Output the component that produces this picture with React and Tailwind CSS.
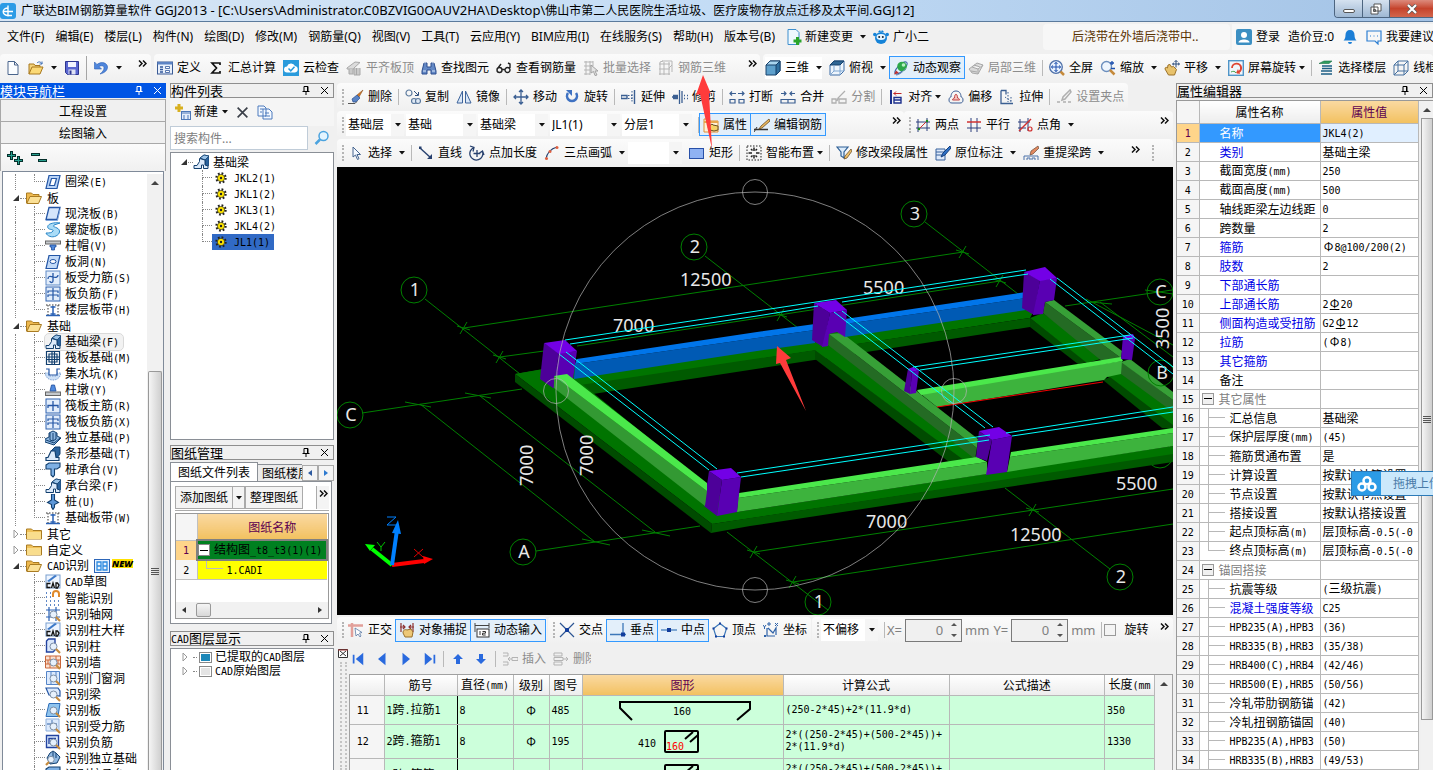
import React from 'react';
import clsx from 'clsx';

const lens = (
  <>
    <circle cx="8.500" cy="8.500" r="3.500" fill="#e7f1fc" stroke="#7c8fa6" />
    <path d="M11 11l4 4" stroke="#c58a3c" strokeWidth="2.200" />
  </>
);

const ICONS = {
  app: (
    <>
      <rect width="16" height="16" rx="3" fill="#2b9be6" />
      <path d="M8 2.500v11M3 8.500h10M8 5a4.500 3.500 0 1 0 0 7.500h4" stroke="#fff" strokeWidth="1.400" fill="none" />
    </>
  ),
  file: <path d="M3 1.500h6.500L13 5v9.500H3zM9.500 1.500V5H13" fill="#fbfdff" stroke="#4a658c" />,
  open: (
    <>
      <path d="M1 14V4h5l1 1.500h5V7" fill="#f3d27a" stroke="#a8781e" />
      <path d="M1 14l3-7h11l-3 7z" fill="#fbd976" stroke="#a8781e" />
      <path d="M9 3c2-2 4-1 5 1M14 1.500V4h-2.500" fill="none" stroke="#3a6cb5" />
    </>
  ),
  save: (
    <>
      <path d="M1.500 1.500h13v13h-11l-2-2z" fill="#5a66d0" stroke="#2d3590" />
      <rect x="4" y="2" width="8" height="5" fill="#f2f4ff" />
      <rect x="4.500" y="9.500" width="7" height="5" fill="#dfe3f5" />
      <rect x="5.500" y="10.500" width="2" height="4" fill="#2d3590" />
    </>
  ),
  undo: <path d="M1.500 2v7h7L6 6.500c3-1.500 5-.5 5 1.500s-1.500 4-4 6c4.500-1 7.500-3.500 7.500-7S9 .5 4 4.500z" fill="#4f86dc" stroke="#2b5fb5" strokeWidth=".6" />,
  define: (
    <>
      <rect x=".5" y="2" width="15" height="12" fill="#e9f0fb" stroke="#3a5b95" />
      <rect x=".5" y="2" width="15" height="2.500" fill="#5c83c4" />
      <path d="M3 7h3M3 9.500h3M3 12h3" stroke="#2f559a" strokeWidth="1.300" />
      <path d="M8.500 6.500h4v2h-4zM8.500 10.500h4v2h-4z" fill="#fff" stroke="#2f559a" strokeWidth=".8" />
    </>
  ),
  sum: <path d="M12 5V3H4l4.500 5L4 13h8v-2" fill="none" stroke="#111" strokeWidth="1.700" />,
  cloud: (
    <>
      <rect width="16" height="16" fill="#2a9bdc" />
      <path d="M4 12.500a3 3 0 0 1 0-6 4.300 4.300 0 0 1 8-.5 3.300 3.300 0 0 1 0 6.500z" fill="#fff" />
      <path d="M5.500 8.500l2.300 2.300 3.700-4" fill="none" stroke="#2a9bdc" strokeWidth="1.500" />
    </>
  ),
  flush: (
    <>
      <path d="M1 8l8-6 5 .5L8 8v1H1z" fill="#dcdcdc" stroke="#a8a8a8" />
      <path d="M3 9v5h4V9M8 8v7h6V8M10.500 8v7" fill="#c9c9c9" stroke="#a8a8a8" />
    </>
  ),
  binoc: (
    <>
      <path d="M3 3h3v4h4V3h3l2 8v3h-5v-4H6v4H1v-3z" fill="#6288c5" stroke="#2c4d8e" />
      <path d="M2 11h3M11 11h3M4 1.500v2M12 1.500v2" stroke="#dbe7fa" />
    </>
  ),
  glasses: <path d="M1 10a2.500 2.500 0 1 0 5 0 2.500 2.500 0 1 0-5 0zM9 10a2.500 2.500 0 1 0 5 0 2.500 2.500 0 1 0-5 0zM6 9.500h3M2 8l3-4M14 8V4l-2-1" fill="none" stroke="#222" strokeWidth="1.400" />,
  batch: (
    <>
      <path d="M1 2h9M1 6h9M1 10h6M1 14h6M3 1v14M7 1v14M10 1v5" stroke="#b5b5b5" fill="none" />
      <path d="M8 5l7 6h-3l2 4-2 .5-1.500-4L8 13z" fill="#e5e5e5" stroke="#a0a0a0" />
    </>
  ),
  rebar3d: <path d="M1 4h11M1 9h11M1 14h11M2 2v13M6 2v13M11 2v13M4 1l10 0v11M14 5l-3 3M2 2l3-1" stroke="#b5b5b5" fill="none" />,
  cube: (
    <>
      <path d="M1 5l4-4h10v10l-4 4H1z" fill="#5ea0cc" stroke="#16406b" />
      <path d="M1 5l4-4h10l-4 4z" fill="#a9d4ee" stroke="#16406b" />
      <path d="M11 5l4-4v10l-4 4z" fill="#2f6f9f" stroke="#16406b" />
    </>
  ),
  topview: (
    <>
      <path d="M1 5l4-4h10v10l-4 4H1z" fill="#eef5fc" stroke="#3a6aa5" />
      <path d="M1 5l4-4h10l-4 4z" fill="#2f6695" stroke="#16406b" />
      <path d="M11 5v10M5 5v6l-4 4M5 11h10" stroke="#7ea7d3" fill="none" />
    </>
  ),
  orbit: (
    <>
      <ellipse cx="8" cy="8" rx="8" ry="3" transform="rotate(-45 8 8)" fill="none" stroke="#3a6aa5" />
      <circle cx="9" cy="6.500" r="4.800" fill="#2da84a" />
      <circle cx="10.500" cy="5" r="1.800" fill="#b6f0c2" />
      <path d="M3 15c3 0 7-3 10-7" fill="none" stroke="#6f8fbb" />
      <path d="M1 14.500l2-4 3 2.500z" fill="#c03030" />
    </>
  ),
  local3d: <path d="M1 9l8-6 6 2-5 9-6-1zM4 7l6 2 5-4M6 5l6 2M10 9v5M3 11l6 1" fill="#d9d9d9" stroke="#a8a8a8" />,
  full: (
    <>
      <circle cx="7" cy="7" r="6.300" fill="#e8f1fd" stroke="#4d6fa8" strokeWidth="1.300" />
      <path d="M7 2.500v9M2.500 7h9M5.500 4L7 2.300 8.500 4M5.500 10L7 11.700 8.500 10M4 5.500L2.300 7 4 8.500M10 5.500L11.700 7 10 8.500" fill="none" stroke="#1c4fae" />
      <path d="M11.500 11.500l3.500 3.500" stroke="#c58a3c" strokeWidth="2.500" />
    </>
  ),
  zoom: (
    <>
      <circle cx="6.500" cy="6.500" r="5" fill="#eef5fd" stroke="#6c8fbe" strokeWidth="1.400" />
      <path d="M12 1v4M10 3h4M11 8.500h4" stroke="#1c4fae" strokeWidth="1.300" />
      <path d="M10 10l4.500 4.500" stroke="#c58a3c" strokeWidth="2.500" />
    </>
  ),
  pan: (
    <>
      <path d="M1 9c0-2 1.500-2 2.500-1L4 5l2-.5L7.500 7l2-.5 3 3-2 5.500H4.500z" fill="#e8c26c" stroke="#9c722a" />
      <path d="M12 .5v7M8.500 4h7M10.500 2L12 .5 13.500 2M10 2.800L8.500 4 10 5.200M14 2.800L15.500 4 14 5.200" stroke="#30507f" fill="none" />
    </>
  ),
  spin: (
    <>
      <rect x=".7" y=".7" width="14.600" height="14.600" fill="#f0f6fc" stroke="#4f95c8" strokeWidth="1.400" />
      <path d="M4 8a4.500 4.500 0 1 1 5 4.500M12 5a4.500 4.500 0 0 1-3 7.500" fill="none" stroke="#e04532" strokeWidth="1.800" />
      <path d="M10 9l-2 4 4 1z" fill="#e04532" />
      <path d="M3 12c2-1 4-1 5 1" stroke="#43a047" fill="none" />
    </>
  ),
  floors: (
    <>
      <path d="M1 3.500L6 1h8l-3 2.500z" fill="#2e9d5f" stroke="#1d6f45" strokeWidth=".6" />
      <path d="M4 6h10M4 8.500h10M3 11h11M3 14h11" stroke="#1d5f85" strokeWidth="1.500" />
    </>
  ),
  wire: <path d="M1 5l4-4h10v10l-4 4H1zM1 5h10v10M11 5l4-4M5 1v10h10M5 11l-4 4" fill="none" stroke="#46709f" />,
  newchange: (
    <>
      <path d="M2 .5h8l3 3v12H2z" fill="#eef8ff" stroke="#3f8fce" />
      <path d="M11.500 8v8M7.500 12h8" stroke="#2aa52a" strokeWidth="3" />
    </>
  ),
  mascot: (
    <>
      <circle cx="8" cy="9" r="6" fill="#1583d8" />
      <circle cx="1.800" cy="5.500" r="1.800" fill="#1583d8" />
      <circle cx="14.200" cy="5.500" r="1.800" fill="#1583d8" />
      <ellipse cx="8" cy="8" rx="4.500" ry="3" fill="#e8f6ff" />
      <circle cx="6.200" cy="8" r="1" fill="#123" />
      <circle cx="9.800" cy="8" r="1" fill="#123" />
      <path d="M5 3l2-2 1 2 1-2 2 2z" fill="#1583d8" />
    </>
  ),
  user: (
    <>
      <rect width="16" height="16" rx="2" fill="#3c8fc2" />
      <circle cx="8" cy="6" r="3" fill="#fff" />
      <path d="M2.500 13.500c0-4 11-4 11 0z" fill="#fff" />
    </>
  ),
  bell: <path d="M8 1c-3 0-4.500 2-4.500 5 0 3-1 4.500-2 5.500h13c-1-1-2-2.500-2-5.500 0-3-1.500-5-4.500-5zM6 13a2 2 0 0 0 4 0z" fill="#1b7ed6" />,
  chat: <path d="M1 2h14v10h-3v3l-3-3H1zM4 7h1M7.500 7h1M11 7h1" fill="none" stroke="#2d7fd2" strokeWidth="1.200" />,
  erase: (
    <>
      <path d="M15 1L9 6l2 2z" fill="#d07a28" stroke="#7c4010" strokeWidth=".5" />
      <path d="M9 6l3 3-4 4H5l-1-3z" fill="#5a83c4" stroke="#274e90" strokeWidth=".7" />
      <path d="M0 14.500h7l2-2" stroke="#555" fill="none" />
    </>
  ),
  copy: (
    <>
      <circle cx="4" cy="4" r="3" fill="none" stroke="#5d7b9f" strokeWidth="1.200" />
      <circle cx="9" cy="12" r="2.500" fill="#dfe9f5" stroke="#5d7b9f" strokeWidth="1.200" />
      <circle cx="13" cy="12" r="2.500" fill="#dfe9f5" stroke="#5d7b9f" strokeWidth="1.200" />
      <path d="M9 2l4 4M13.500 3v3.500H10" fill="none" stroke="#30507f" />
    </>
  ),
  mirror: <path d="M6.500 2L1 14h5.500zM9.500 2L15 14H9.500z" fill="#dbe8f8" stroke="#3d639b" />,
  move: <path d="M8 1v14M1 8h14M6 3l2-2 2 2M6 13l2 2 2-2M3 6L1 8l2 2M13 6l2 2-2 2" fill="none" stroke="#3b5f92" strokeWidth="1.300" />,
  rotate: (
    <>
      <path d="M4 4a5 5 0 1 0 8 0" fill="none" stroke="#3f72c2" strokeWidth="2.600" />
      <path d="M2 1h6v6z" fill="#3f72c2" />
    </>
  ),
  extend: (
    <>
      <path d="M0 6.500h6v3H0zM13.500 1v14" fill="none" stroke="#3b5f92" strokeWidth="1.400" />
      <path d="M7 6.500h5M7 9.500h5M11 2v12" fill="none" stroke="#3b5f92" strokeDasharray="1.500 1.500" />
    </>
  ),
  trim: <path d="M0 8h6M1 6.500h5M1 9.500h5M7.500 1v14M10 2v12M12 6.500h1M15 6.500h1M12 9.500h1M15 9.500h1" fill="none" stroke="#3b5f92" strokeWidth="1.300" />,
  brk: <path d="M1 10.500h5v3.500H1zM10 10.500h5v3.500h-5zM1 4.500h6M9 4.500h6M3 2.500l-2 2 2 2M13 2.500l2 2-2 2" fill="none" stroke="#3b5f92" strokeWidth="1.200" />,
  merge: <path d="M1 10.500h14v3.500H1zM8 10.500v3.500M1 4.500h5M10 4.500h5M4 2.500l2 2-2 2M12 2.500l-2 2 2 2" fill="none" stroke="#3b5f92" strokeWidth="1.200" />,
  split: <path d="M1 10h4v4H1zM8 10h7v4H8zM14 2l-7 7-1 3" fill="none" stroke="#b0b0b0" strokeWidth="1.300" />,
  align: (
    <>
      <path d="M3 1v14" stroke="#1c2f8c" strokeWidth="2" />
      <path d="M6 8.500h7v5.500H6zM6 11h7" fill="#fff" stroke="#1c2f8c" strokeWidth="1.400" />
      <path d="M5.500 4.500h8M8 2.500l-2 2 2 2" stroke="#c42525" fill="none" />
    </>
  ),
  offset: (
    <>
      <path d="M1 11c0-2 1-3 2-3 0-4 2-6 5-6s5 2 5 6c1 0 2 1 2 3s-1 3-3 3H4c-2 0-3-1-3-3z" fill="none" stroke="#3d5f95" />
      <path d="M4.500 11c0-1 1-2 2-2 0-5 3-5 3 0 1 0 2 1 2 2z" fill="#f4c4c0" stroke="#c04040" />
    </>
  ),
  stretch: (
    <>
      <path d="M2 1.500h5v4M2 1.500v13h12" fill="none" stroke="#3b5f92" strokeWidth="1.300" />
      <path d="M9 3v10M6 8l7 5M12 8v5" stroke="#3b5f92" strokeDasharray="1.500 1.500" fill="none" />
    </>
  ),
  grip: <path d="M14 1L7 8l-1 3 3-1 6-7zM1 13h3M7 13h3M12 13h3" fill="none" stroke="#b0b0b0" strokeWidth="1.500" />,
  prop: (
    <>
      <path d="M1 2h5l1 2h8v11H1z" fill="#fff2d8" stroke="#e08f35" />
      <path d="M1 4h14v2H1z" fill="#e8a64c" />
      <path d="M5 10l4-3 1 1 5 1v4l-4 1-4-1z" fill="#f4d268" stroke="#6a5020" />
    </>
  ),
  edit: (
    <>
      <path d="M0 12.500h14" stroke="#333" strokeWidth="1.300" />
      <path d="M15 2l-8 7-2 3 3-1 8-7z" fill="#e9b860" stroke="#6a4a20" strokeWidth=".8" />
      <path d="M0 15l3-5" stroke="#333" />
    </>
  ),
  twopt: (
    <>
      <path d="M3 2v13M12 1v13M1 5h14M1 11h14" stroke="#2d3e7c" fill="none" />
      <path d="M3 13L13 3" stroke="#d03030" />
      <circle cx="4" cy="12" r="1.200" fill="#188a18" />
      <circle cx="12" cy="4" r="1.200" fill="#188a18" />
    </>
  ),
  parallel: (
    <>
      <path d="M5 1v14M11 1v14M1 11h14" stroke="#2d3e7c" />
      <path d="M1 5h14" stroke="#d03030" strokeWidth="1.400" />
    </>
  ),
  ptangle: (
    <>
      <path d="M3 2v13M11 1v13M1 5h12M1 11h8" stroke="#2d3e7c" fill="none" />
      <path d="M2 14L14 2" stroke="#d03030" strokeWidth="1.400" />
      <circle cx="13" cy="12" r="2" fill="none" stroke="#d03030" strokeWidth="1.200" />
    </>
  ),
  cursor: <path d="M5 2v10l2.500-2 2 4.500 1.500-.8L9 9.500h3.500z" fill="#f5f9ff" stroke="#46658f" />,
  line: (
    <>
      <path d="M2 3l11 10" stroke="#27406e" strokeWidth="1.400" />
      <path d="M1 1.500h2.500V4H1zM14 14V9l-5 5z" fill="#27406e" />
    </>
  ),
  ptlen: <path d="M5 2.500a6.500 6.500 0 1 0 8.500 4M15 10l-1.500-4-3 2M1 1l4 1.500-1 4M8 5v7M4.500 8.500h7" fill="none" stroke="#27406e" strokeWidth="1.300" />,
  arc: (
    <>
      <path d="M2 14C3 8 6 4 13 2" fill="none" stroke="#27406e" strokeWidth="1.200" />
      <circle cx="2.500" cy="13.500" r="1.500" fill="#e06040" />
      <circle cx="6" cy="6.500" r="1.500" fill="#e06040" />
      <circle cx="13" cy="2.500" r="1.500" fill="#e06040" />
    </>
  ),
  rect: <rect x=".5" y="3.500" width="14" height="10" fill="#8fb2f3" stroke="#2850a8" />,
  smart: (
    <>
      <rect x="1" y="1" width="14" height="14" fill="none" stroke="#222" strokeDasharray="1.500 1.500" />
      <path d="M8 2.500V6M8 10v3.500M2.500 8H6M10 8h3.500M5 4l1.500 1.500M11 4L9.500 5.500M5 12l1.500-1.500M11 12l-1.500-1.500" stroke="#222" strokeWidth="1.500" />
    </>
  ),
  segprop: (
    <>
      <path d="M1 2h11l-4 5v6l-3-2V7z" fill="#dcecfb" stroke="#2d5f95" strokeWidth="1.200" />
      <path d="M15 4l-6 7-1 3 3-1 5-7z" fill="#efc068" stroke="#5a4020" strokeWidth=".7" />
    </>
  ),
  insitu: (
    <>
      <path d="M1 4h9v11H1zM1 7h8M1 10h8" fill="#dfeafa" stroke="#36609c" />
      <path d="M15 1L8 8l-2 4 4-2 6-7z" fill="#2f72c8" stroke="#153f7c" />
    </>
  ),
  respan: (
    <>
      <path d="M1 15v-4h14v4M4 15v-2h3v2M9 15v-2h3v2" fill="none" stroke="#4a71a8" />
      <path d="M15 1L8 6l-1 4 3-1 6-6z" fill="#e2895f" stroke="#6a4a3a" strokeWidth=".7" />
    </>
  ),
  ortho: (
    <>
      <path d="M0 3.500h15M4 1v14" stroke="#e2a09a" strokeWidth="2.500" />
      <path d="M7 6l1 8 2-2 2 3 1-1-1.500-3 2.500-.5z" fill="#fff" stroke="#5c7ba5" strokeWidth=".8" />
    </>
  ),
  snap: (
    <>
      <path d="M2 1v9M14 1v9M1 5h5M10 5h5M4 3l2 2-2 2M12 3l-2 2 2 2" stroke="#8c3030" fill="none" strokeWidth="1.200" />
      <path d="M4 11c0-3 2-4 4-3l4-1 2 3-1 5H6z" fill="#edc878" stroke="#98702c" />
    </>
  ),
  dynin: (
    <>
      <path d="M1 1v9M15 1v5M1 3.500h14" stroke="#444" fill="none" />
      <rect x="3" y="7" width="12" height="8" fill="#fff" stroke="#333" />
      <path d="M6 9v4M8.500 9.500h3v1.700h-3V13h3.200" stroke="#333" fill="none" />
    </>
  ),
  cross: (
    <>
      <path d="M1 1l14 14M15 1L1 15" stroke="#2c5593" strokeWidth="1.200" />
      <rect x="6" y="6" width="4" height="4" fill="#123d9c" />
    </>
  ),
  perp: (
    <>
      <path d="M13 1v13M0 12.500h16" stroke="#3c77b9" strokeWidth="1.300" fill="none" />
      <rect x="11" y="10.500" width="4" height="4" fill="#123d9c" />
    </>
  ),
  mid: (
    <>
      <path d="M0 8h16" stroke="#5c8fc6" strokeWidth="1.500" />
      <rect x="6" y="6" width="4" height="4" fill="#123d9c" />
    </>
  ),
  vertex: (
    <>
      <path d="M8 1.500l6.500 5-2.500 8H4l-2.500-8z" fill="none" stroke="#3c77b9" strokeWidth="1.200" />
      <path d="M7 .5h2v2H7zM.5 5.500h2v2h-2zM13.500 5.500h2v2h-2zM3 13.500h2v2H3zM11 13.500h2v2h-2z" fill="#123d9c" />
    </>
  ),
  coord: (
    <>
      <path d="M4 6v8h8M5 6l5 5 3-5v7" fill="none" stroke="#2e62a8" strokeWidth="1.200" />
      <path d="M0 3l1.500 2L3 3M1.500 5v2M12 1l3 3M15 1l-3 3M1 13l2 2M3 13l-2 2M5 1h2v2H5z" fill="none" stroke="#2e62a8" />
    </>
  ),
  first: <path d="M3 3v10M13 3L7 8l6 5z" fill="#2a6ade" stroke="#2a6ade" strokeWidth="2" />,
  prev: <path d="M11 3L5 8l6 5z" fill="#2a6ade" stroke="#2a6ade" strokeWidth="2" />,
  next: <path d="M5 3l6 5-6 5z" fill="#2a6ade" stroke="#2a6ade" strokeWidth="2" />,
  last: <path d="M13 3v10M3 3l6 5-6 5z" fill="#2a6ade" stroke="#2a6ade" strokeWidth="2" />,
  up: <path d="M8 3L3 8h3v5h4V8h3z" fill="#2a6ade" />,
  down: <path d="M8 13L3 8h3V3h4v5h3z" fill="#2a6ade" />,
  insert: <path d="M1 2h5v3H1M1 11h5v3H1M6 8h4M8 6l-2 2 2 2M10 6.500h6v3h-6z" fill="none" stroke="#b3b3b3" />,
  remove: <path d="M1 2h8v3H1zM1 11h8v3H1zM1 6.500h9v3H1zM10 8h5M13 6l2 2-2 2" fill="none" stroke="#b3b3b3" />,
  newcomp: (
    <>
      <path d="M4 0v8M0 4h8" stroke="#d8b020" strokeWidth="3" />
      <rect x="6.500" y="7.500" width="9" height="8" fill="#e3edfb" stroke="#4c77b8" />
      <path d="M7 9h8M8 12h2M12 12h2M8 14h2M12 14h2" stroke="#4c77b8" />
    </>
  ),
  del: <path d="M2 2l12 12M14 2L2 14" stroke="#3a3f48" strokeWidth="2" />,
  pages: <path d="M1 2h6l2 2v8H1zM6 5h6l3 3v7H6zM3 5h3M3 8h2M8 9h4M8 12h5" fill="#f3f8ff" stroke="#4c7bbd" />,
  search: (
    <>
      <circle cx="9.500" cy="6" r="4.500" fill="#e3f4ff" stroke="#4ba3df" strokeWidth="1.500" />
      <path d="M6 9.500L1.500 14" stroke="#4ba3df" strokeWidth="2.500" />
    </>
  ),
  gear: (
    <>
      <circle cx="6" cy="6" r="4.500" fill="none" stroke="#222" strokeWidth="2.400" strokeDasharray="1.700 1.830" />
      <circle cx="6" cy="6" r="3.600" fill="#ffe600" stroke="#222" strokeWidth=".6" />
      <circle cx="6" cy="6" r="1.200" fill="#222" />
    </>
  ),
  folder: (
    <>
      <path d="M.5 3h5l1.500 1.500h8.500V13H.5z" fill="#f0c25a" stroke="#a97b22" />
      <path d="M1 6h14v7H1z" fill="#f9dd8d" />
    </>
  ),
  folderOpen: (
    <>
      <path d="M.5 13V3h5L7 4.500h6V7" fill="#eeb94f" stroke="#a97b22" />
      <path d="M.8 13.500L4 6.500h11.500l-3 7z" fill="#fbe096" stroke="#a97b22" />
    </>
  ),
  ring: <path d="M4 1.500h11L12 14.500H1zM6.500 4.500h5L9.500 11.500h-5z" fill="#b8d3f7" fillRule="evenodd" stroke="#2456a5" strokeWidth="1.200" />,
  slab: (
    <>
      <path d="M4 1.500h11L12 13.500H1z" fill="#d4e5fb" stroke="#2456a5" strokeWidth="1.300" />
      <path d="M1 14.500h11.500l2.500-11" fill="none" stroke="#7fa6dd" />
    </>
  ),
  spiral: <path d="M15 1C9 0 1 2 3 6c1 2 6 1 5 3s-4 2-7 2c1 3 6 5 10 3s5-6 1-8-4-1-3-3z" fill="#aadcf7" stroke="#2b87c8" />,
  cap: (
    <>
      <rect x=".5" y="3" width="15" height="3" fill="#c4c8cc" stroke="#666" />
      <path d="M5 7h6v2H9.500v3h-3V9H5z" fill="#4f8ade" stroke="#1f4c9a" strokeWidth=".8" />
    </>
  ),
  hole: (
    <>
      <path d="M4 1.500h11L12 14.500H1z" fill="#c2daf8" stroke="#2456a5" strokeWidth="1.200" />
      <ellipse cx="8" cy="7.500" rx="3" ry="2" fill="#fff" stroke="#2456a5" />
    </>
  ),
  barS: (
    <>
      <rect x="1" y="1" width="14" height="14" fill="#e2edfb" stroke="#5e8ac6" />
      <path d="M3 9c0-3 2-3 5-2s5 0 5-2M8 3v8c0 2-3 2-3 0" fill="none" stroke="#2456a5" strokeWidth="1.300" />
    </>
  ),
  barF: (
    <>
      <rect x="1" y="1" width="14" height="14" fill="#e2edfb" stroke="#2f62b0" />
      <path d="M3 7V5h10v2M3 11V9h10v2M8 2v12" fill="none" stroke="#2456a5" strokeWidth="1.200" />
    </>
  ),
  strip: (
    <>
      <path d="M1 13.500h14" stroke="#2b62b5" strokeWidth="1.500" />
      <path d="M1 3h14M3 3v10M13 3v10" stroke="#333" strokeDasharray="1.500 1.500" />
      <path d="M8 4v9M5.500 5h5M5.500 12h5" stroke="#2b62b5" strokeWidth="1.500" />
    </>
  ),
  beam: (
    <>
      <path d="M7 4l4-3 5 1v9l-4 4V7z" fill="#2a629c" stroke="#123f6e" strokeWidth=".8" />
      <path d="M7 4l4-3 5 1-4 4z" fill="#9cc4e8" stroke="#123f6e" strokeWidth=".8" />
      <path d="M1 14.500v-3h3l2.500-4V4.500L12 6v5l3 1v2.500h-4.500V11h-2v3.500z" fill="#dceafa" stroke="#123f6e" />
    </>
  ),
  raft: <path d="M1.500 1.500h13v13h-13zM4 4h8v8H4zM7 1v14M9.500 1v14M1 7h14M1 9.500h14" fill="none" stroke="#123f6e" strokeWidth="1.200" />,
  pit: (
    <>
      <path d="M0 7h4v3h8V7h4c-1 5-4 7-8 7s-7-2-8-7z" fill="#cfe1f7" stroke="#7fa3d2" strokeDasharray="1.500 1" />
      <path d="M1 3h3v6h8V3h3" fill="none" stroke="#2456a5" strokeWidth="1.200" />
    </>
  ),
  pier: (
    <>
      <rect x=".5" y="10" width="15" height="3.500" fill="#c4c8cc" stroke="#666" />
      <path d="M5 9l1.500-6h3L11 9z" fill="#4f8ade" stroke="#1f4c9a" strokeWidth=".8" />
    </>
  ),
  mainbar: (
    <>
      <rect x="1" y="1" width="14" height="14" fill="#e2edfb" stroke="#2f62b0" />
      <path d="M3 10V7.500h10V10M8 3v10" fill="none" stroke="#2456a5" strokeWidth="1.300" />
    </>
  ),
  footing: (
    <>
      <path d="M0 9l4-2V3l4-2 4 2v3l4 2-7 7-9-3z" fill="#8fb8e2" stroke="#123f6e" />
      <path d="M5 3v7l3 1V3M11 3v6l-3 2M1 10l8 3 6-5" stroke="#123f6e" fill="none" />
    </>
  ),
  stripf: (
    <>
      <path d="M6 5l4-4h5v7l-3 4z" fill="#2a629c" stroke="#123f6e" />
      <path d="M1 14.500v-3h2L6 5h4l1 6.500h3v3z" fill="#dceafa" stroke="#123f6e" strokeWidth="1.200" />
    </>
  ),
  pilecap: <path d="M1 3l3-2h11v4l-3 2H9.500v6L8 15l-2-2V7H1z" fill="#7eb0e4" stroke="#123f6e" strokeWidth="1.100" />,
  pile: <path d="M6.500 0h3v6l4 2.500-4 2v2.500l-1.500 2.500L6.500 13v-2.500l-4-2L6.500 6z" fill="#5d97d8" stroke="#123f6e" strokeWidth="1.100" />,
  cad: (
    <>
      <rect x="1" y="1" width="14" height="13" fill="#eef5ff" stroke="#7a9fd0" />
      <path d="M2 7l8-6 2 1-8 6z" fill="#3c79c8" />
      <path d="M5.500 9.500H2v4h3.500M6.500 14l1.500-5 1.500 5M11 9h1.500l1.500 2-1.500 3H11z" fill="none" stroke="#111" strokeWidth="1.300" />
    </>
  ),
  magnet: (
    <>
      <path d="M1 3h1M5 3h1M1 7h1M5 7h1M1 11h1M5 11h1M9 11h1M13 11h1M1 15h1M5 15h1M9 15h1M13 15h1" stroke="#2b62b5" strokeWidth="1.500" />
      <path d="M8 7V4a3 3 0 0 1 6 0v3" fill="none" stroke="#e08a2c" strokeWidth="2" />
    </>
  ),
  idgrid: (
    <>
      <path d="M4 1v14M11 1v14M1 4h14M1 11h14" stroke="#2b62b5" strokeWidth="1.200" />
      {lens}
    </>
  ),
  idcol: (
    <>
      <path d="M1.500 3l2-2H10v11l-2 2H1.500z" fill="#dbe8fb" stroke="#2243a0" strokeWidth="1.400" />
      {lens}
    </>
  ),
  idwall: (
    <>
      <path d="M.5 2h15v12H.5zM.5 6h15M.5 10h15M5 2v4M11 2v4M3 6v4M13 6v4M5 10v4" fill="#fbe1d1" stroke="#c9663a" />
      {lens}
    </>
  ),
  iddoor: (
    <>
      <path d="M1.500 1.500h13v13h-13zM6 1.500v13M11 1.500v5" fill="#dceafd" stroke="#5585c8" />
      {lens}
    </>
  ),
  idbeam: (
    <>
      <path d="M1 2h12l2 3v5L4 9z" fill="#dceafd" stroke="#2456a5" strokeWidth="1.200" />
      {lens}
    </>
  ),
  idslab: (
    <>
      <path d="M4 1.500h11L13 14.500H1z" fill="#8fc4ee" stroke="#2d6db8" />
      {lens}
    </>
  ),
  idbar: (
    <>
      <path d="M1 1h13v12H1z" fill="#dceafd" stroke="#8fb0dc" />
      <path d="M2 6h10M7 2v10" stroke="#6a90c4" strokeWidth="1.300" />
      {lens}
    </>
  ),
  idneg: (
    <>
      <path d="M1.500 1.500h12v12h-12zM4 10V4.500h7" fill="#dceafd" stroke="#2243a0" strokeWidth="1.400" />
      {lens}
    </>
  ),
  idfoot: (
    <>
      <path d="M2 8l3-5 3-2 3 2 4 4-3 6-7 1z" fill="#8fb8e2" stroke="#123f6e" />
      <path d="M8 2v5M11 3v5" stroke="#123f6e" />
      <circle cx="6" cy="9.500" r="3.200" fill="#e7f1fc" stroke="#7c8fa6" />
      <path d="M4 12l-3 3" stroke="#c58a3c" strokeWidth="2.200" />
    </>
  ),
  book: (
    <>
      <rect x=".5" y="1.500" width="15" height="13" fill="#e9f3fd" stroke="#2d66b8" />
      <path d="M3 4h4v8H3zM9 4h4v8H9zM3 8h4M9 8h4" fill="none" stroke="#2d8be0" strokeWidth="1.300" />
    </>
  ),
};

const Icon = ({ name, className = 'size-4' }) => (
  <svg viewBox="0 0 16 16" className={clsx('shrink-0', className)} aria-hidden="true">
    {ICONS[name]}
  </svg>
);

// latin runs take half the width of a chinese character
const Sim = ({ children }) => (
  <span>
    {String(children).split(/([\x20-\x7e]+)/).map((t, i) =>
      i % 2 ? <span key={i} className="font-[DejaVu_Sans_Mono,monospace] text-[10px]">{t}</span> : t
    )}
  </span>
);

const Caret = ({ className }) => (
  <svg viewBox="0 0 6 4" className={clsx('h-1 w-1.5 shrink-0', className)} aria-hidden="true">
    <path d="M0 0h6L3 3.500z" fill="#111" />
  </svg>
);

const Tool = ({ icon, label, caret, tight, active, disabled, white }) => (
  <button
    type="button"
    disabled={disabled}
    className={clsx(
      'flex shrink-0 items-center gap-1 whitespace-nowrap',
      active && '-mx-1 h-[23px] border border-[#3399ff] bg-[#e3effa] px-[3px]',
      white && 'h-[22px] bg-white',
      disabled && 'text-[#8c8c8c]'
    )}
  >
    <Icon name={icon} />
    <span>{label}</span>
    {caret && <Caret className={tight ? '-ml-px' : 'ml-[3px]'} />}
  </button>
);

const Sep = () => <span className="-mx-px h-4 w-px shrink-0 bg-[#b9b9b9]" />;

const Grip = () => <span className="-mr-[3px] ml-[5px] h-4 w-0 shrink-0 border-l-2 border-dotted border-[#b5b5b5]" />;

const More = ({ className }) => (
  <button type="button" aria-label="更多" className={clsx('shrink-0', className)}>
    <svg viewBox="0 0 9 7" className="mb-2 h-[7px] w-[9px]">
      <path d="M1 .5l3 3-3 3M5 .5l3 3-3 3" fill="none" stroke="#111" strokeWidth="1.500" />
    </svg>
  </button>
);

const Bar = ({ children, className }) => (
  <div className={clsx('flex items-center gap-[7px] overflow-hidden rounded-sm bg-linear-to-b from-[#fbfbfb] to-[#f0f0f0]', className)}>
    {children}
  </div>
);

const Combo = ({ name, value, className }) => (
  <label className={clsx('relative flex h-[22px] shrink-0 bg-white', className)}>
    <span className="sr-only">{name}</span>
    <select defaultValue={value} className="w-full appearance-none pl-0.5 outline-none">
      <option>{value}</option>
    </select>
    <span className="pointer-events-none absolute inset-y-0 right-0 flex w-[13px] items-center justify-center bg-[#f5f5f5]">
      <Caret />
    </span>
  </label>
);

const PanelTitle = ({ title, blue }) => (
  <div
    className={clsx(
      'flex h-[15px] shrink-0 items-center font-[Noto_Sans_CJK_SC,sans-serif] text-[13px]',
      blue ? 'bg-[#0055e5] text-white' : 'border border-[#8e8e8e] bg-[#f0f0f0] text-black'
    )}
  >
    <h2 className="flex-1 whitespace-nowrap"><Sim>{title}</Sim></h2>
    <button type="button" aria-label="固定" className="mr-2.5">
      <svg viewBox="0 0 8 9" className="h-[9px] w-2">
        <path d="M2 .5h4v5H2zM5.500 1v4M.5 5.500h7M4 6v3" fill="none" stroke="currentColor" />
      </svg>
    </button>
    <button type="button" aria-label="关闭" className="mr-1">
      <svg viewBox="0 0 9 9" className="size-[9px]">
        <path d="M1 1l7 7M8 1L1 8" fill="none" stroke="currentColor" />
      </svg>
    </button>
  </div>
);

const menus = [
  '文件(F)', '编辑(E)', '楼层(L)', '构件(N)', '绘图(D)', '修改(M)', '钢筋量(Q)', '视图(V)',
  '工具(T)', '云应用(Y)', 'BIM应用(I)', '在线服务(S)', '帮助(H)', '版本号(B)',
];

const TitleBar = () => (
  <header className="flex h-[22px] shrink-0 items-center border-b border-[#5b7a9c] bg-linear-to-r from-[#d8e6f5] via-[#c3dcf5] to-[#a3c3e6]">
    <Icon name="app" />
    <h1 className="ml-[5px] flex-1 whitespace-nowrap text-black">
      广联达BIM钢筋算量软件 <span className="text-[13px]">GGJ2013 - [C:\Users\Administrator.C0BZVIG0OAUV2HA\Desktop\</span>
      佛山市第二人民医院生活垃圾、医疗废物存放点迁移及太平间<span className="text-[13px]">.GGJ12]</span>
    </h1>
    <div className="flex h-[18px] self-start overflow-hidden rounded-bl border-b border-l border-[#4d6580]">
      <button type="button" aria-label="最小化" className="flex w-7 items-center justify-center border-r border-[#4d6580] bg-linear-to-b from-[#d5e2f0] to-[#9fb8d3]">
        <span className="mt-1 h-1 w-3 rounded-sm border border-[#555] bg-white" />
      </button>
      <button type="button" aria-label="还原" className="flex w-[27px] items-center justify-center border-r border-[#4d6580] bg-linear-to-b from-[#d5e2f0] to-[#9fb8d3]">
        <svg viewBox="0 0 12 12" className="size-3">
          <path d="M4 1h7v7H4zM1 4h7v7H1zM3.500 6.500h2v2h-2z" fill="#fff" stroke="#555" />
        </svg>
      </button>
      <button type="button" aria-label="关闭" className="flex w-[43px] items-center justify-center bg-linear-to-b from-[#dc8a7c] via-[#c5432c] to-[#d2654c]">
        <svg viewBox="0 0 12 10" className="h-2.5 w-3">
          <path d="M2 1l8 8M10 1L2 9" stroke="#555" strokeWidth="3.500" />
          <path d="M2 1l8 8M10 1L2 9" stroke="#fff" strokeWidth="2.200" />
        </svg>
      </button>
    </div>
  </header>
);

const MenuBar = () => (
  <nav className="flex h-[30px] shrink-0 items-center overflow-hidden whitespace-nowrap bg-[#f0f0f0] pl-[7px]">
    <div className="flex flex-1 items-center gap-[11px]">
      {menus.map((m) => (
        <button type="button" key={m}>{m}</button>
      ))}
      <button type="button" className="flex items-center gap-[3px]">
        <Icon name="newchange" />新建变更<Caret className="ml-1" />
      </button>
      <button type="button" className="-ml-1 flex items-center gap-1">
        <Icon name="mascot" />广小二
      </button>
    </div>
    <p className="mr-0.5 flex h-[26px] w-[187px] shrink-0 items-center rounded-sm bg-[#f7f7f7] pl-[29px] text-[#5a3200]">后浇带在外墙后浇带中..</p>
    <div className="flex h-[26px] w-[201px] shrink-0 items-center gap-2 overflow-hidden bg-[#f7f7f7] pl-1">
      <button type="button" className="flex shrink-0 items-center gap-1"><Icon name="user" />登录</button>
      <span className="shrink-0">造价豆:0</span>
      <Icon name="bell" />
      <button type="button" className="flex shrink-0 items-center gap-1"><Icon name="chat" />我要建议</button>
    </div>
  </nav>
);

const MainTools = () => (
  <div className="flex h-[31px] shrink-0 items-center gap-[3px] bg-[#f0f0f0]">
    <Bar className="h-[27px] w-[151px] shrink-0 pl-[5px]">
      <button type="button" aria-label="新建"><Icon name="file" /></button>
      <button type="button" aria-label="打开" className="flex items-center gap-[7px]"><Icon name="open" /><Caret /></button>
      <button type="button" aria-label="保存"><Icon name="save" /></button>
      <span className="-mx-px h-6 w-px bg-[#a5a5a5]" />
      <button type="button" aria-label="撤销" className="flex items-center gap-[7px]"><Icon name="undo" /><Caret /></button>
      <More className="mr-1 ml-auto" />
    </Bar>
    <Bar className="h-[27px] w-[606px] shrink-0 pl-[3px]">
      <Tool icon="define" label="定义" />
      <Tool icon="sum" label="汇总计算" />
      <Tool icon="cloud" label="云检查" />
      <Tool icon="flush" label="平齐板顶" disabled />
      <Tool icon="binoc" label="查找图元" />
      <Tool icon="glasses" label="查看钢筋量" />
      <Tool icon="batch" label="批量选择" disabled />
      <Tool icon="rebar3d" label="钢筋三维" disabled />
      <More className="mr-[3px] ml-auto" />
    </Bar>
    <Bar className="h-[27px] flex-1 pl-0.5">
      <Tool icon="cube" label="三维" caret white />
      <Tool icon="topview" label="俯视" caret />
      <Tool icon="orbit" label="动态观察" active />
      <Tool icon="local3d" label="局部三维" disabled />
      <Sep />
      <Tool icon="full" label="全屏" />
      <Tool icon="zoom" label="缩放" caret />
      <Tool icon="pan" label="平移" caret />
      <Tool icon="spin" label="屏幕旋转" caret tight />
      <Sep />
      <Tool icon="floors" label="选择楼层" />
      <Tool icon="wire" label="线框" />
    </Bar>
  </div>
);

const navTree = [
  { label: '圈梁(E)', icon: 'ring', last: true },
  { label: '板', group: true, open: true },
  { label: '现浇板(B)', icon: 'slab' },
  { label: '螺旋板(B)', icon: 'spiral' },
  { label: '柱帽(V)', icon: 'cap' },
  { label: '板洞(N)', icon: 'hole' },
  { label: '板受力筋(S)', icon: 'barS' },
  { label: '板负筋(F)', icon: 'barF' },
  { label: '楼层板带(H)', icon: 'strip', last: true },
  { label: '基础', group: true, open: true },
  { label: '基础梁(F)', icon: 'beam', selected: true },
  { label: '筏板基础(M)', icon: 'raft' },
  { label: '集水坑(K)', icon: 'pit' },
  { label: '柱墩(Y)', icon: 'pier' },
  { label: '筏板主筋(R)', icon: 'mainbar' },
  { label: '筏板负筋(X)', icon: 'barF' },
  { label: '独立基础(P)', icon: 'footing' },
  { label: '条形基础(T)', icon: 'stripf' },
  { label: '桩承台(V)', icon: 'pilecap' },
  { label: '承台梁(F)', icon: 'beam' },
  { label: '桩(U)', icon: 'pile' },
  { label: '基础板带(W)', icon: 'strip', last: true },
  { label: '其它', group: true },
  { label: '自定义', group: true },
  { label: 'CAD识别', group: true, open: true, badge: true },
  { label: 'CAD草图', icon: 'cad' },
  { label: '智能识别', icon: 'magnet' },
  { label: '识别轴网', icon: 'idgrid' },
  { label: '识别柱大样', icon: 'cad' },
  { label: '识别柱', icon: 'idcol' },
  { label: '识别墙', icon: 'idwall' },
  { label: '识别门窗洞', icon: 'iddoor' },
  { label: '识别梁', icon: 'idbeam' },
  { label: '识别板', icon: 'idslab' },
  { label: '识别受力筋', icon: 'idbar' },
  { label: '识别负筋', icon: 'idneg' },
  { label: '识别独立基础', icon: 'idfoot' },
  { label: '识别桩承台', icon: 'pilecap' },
];

const Expander = ({ open }) => (
  <svg viewBox="0 0 8 8" className="size-2 shrink-0" aria-hidden="true">
    {open ? <path d="M7 1v6H1z" fill="#333" /> : <path d="M2 0l4 4-4 4z" fill="#fff" stroke="#999" />}
  </svg>
);

const Branch = ({ last, className }) => (
  <span className={clsx('shrink-0', className)}>
    <span className="block h-2 border-b border-l border-dotted border-[#888]" />
    <span className={clsx('block h-2', !last && 'border-l border-dotted border-[#888]')} />
  </span>
);

const NavTree = () => (
  <ul className="min-w-0 flex-1 overflow-hidden whitespace-nowrap font-[Noto_Sans_CJK_SC,sans-serif]">
    {navTree.map((n, i) => (
      <li key={n.label + i} className="flex h-4 items-center">
        {n.group ? (
          <>
            <span className="w-[9px] shrink-0" />
            <Expander open={n.open} />
            <span className="w-1.5 shrink-0 border-b border-dotted border-[#888]" />
            <Icon name={n.open ? 'folderOpen' : 'folder'} />
            <span className="ml-[5px]"><Sim>{n.label}</Sim></span>
            {n.badge && (
              <>
                <Icon name="book" className="ml-[5px] size-4" />
                <span className="mb-1.5 ml-0.5 bg-[#ffe100] font-['Open_Sans'] text-[9px] leading-[9px] font-extrabold italic">NEW</span>
              </>
            )}
          </>
        ) : (
          <>
            <span className={clsx('ml-3 h-4 w-[19px] shrink-0', i < 24 && 'border-l border-dotted border-[#888]')} />
            <Branch last={n.last} className="w-[11px]" />
            <span className={clsx('flex h-4 items-center gap-1 pr-1', n.selected && 'rounded-sm bg-[#f2f2f2] outline outline-[#d9d9d9]')}>
              <Icon name={n.icon} />
              <Sim>{n.label}</Sim>
            </span>
          </>
        )}
      </li>
    ))}
  </ul>
);

const VScroll = ({ className, thumb }) => (
  <div className={clsx('flex shrink-0 flex-col items-center bg-[#f1f1f1]', className)} aria-hidden="true">
    <span className="flex h-[17px] shrink-0 items-center">
      <svg viewBox="0 0 8 4" className="h-1 w-2"><path d="M0 4l4-4 4 4z" fill="#444" /></svg>
    </span>
    {thumb}
  </div>
);

const ThumbLines = () => (
  <span className="flex flex-col gap-px">
    <span className="h-px w-2 bg-[#555]" />
    <span className="h-px w-2 bg-[#555]" />
    <span className="h-px w-2 bg-[#555]" />
    <span className="h-px w-2 bg-[#555]" />
  </span>
);

const NavPanel = () => (
  <aside className="flex w-[166px] shrink-0 flex-col">
    <PanelTitle title="模块导航栏" blue />
    <div className="flex flex-col pt-px font-[Noto_Sans_CJK_SC,sans-serif]">
      <button type="button" className="h-[23px] border border-[#a8a8a8] bg-[#f0f0f0]">工程设置</button>
      <button type="button" className="h-[22px] border border-t-0 border-[#a8a8a8] bg-[#f0f0f0]">绘图输入</button>
    </div>
    <div className="flex h-[27px] shrink-0 items-center gap-2 border-x border-[#a8a8a8] bg-linear-to-b from-[#fbfbfb] to-[#f0f0f0] pl-1.5">
      <button type="button" aria-label="全部展开">
        <svg viewBox="0 0 16 14" className="h-3.5 w-4">
          <path d="M4.500 0v9M0 4.500h9M11.500 5v9M7 9.500h9" stroke="#052f2b" strokeWidth="3" />
          <path d="M4.500 1v7M1 4.500h7M11.500 6v7M8 9.500h7" stroke="#27a08f" />
        </svg>
      </button>
      <button type="button" aria-label="全部折叠">
        <svg viewBox="0 0 16 14" className="h-3.5 w-4">
          <path d="M0 3.500h9M7 9.500h9" stroke="#052f2b" strokeWidth="3" />
          <path d="M1 3.500h7M8 9.500h7" stroke="#27a08f" />
        </svg>
      </button>
    </div>
    <div className="mx-0.5 flex min-h-0 flex-1 border border-b-0 border-[#7f8a99] bg-white pt-0.5">
      <NavTree />
      <VScroll
        className="w-4"
        thumb={
          <span className="mt-[180px] flex w-[14px] flex-1 items-center justify-center rounded-t-xs border border-b-0 border-[#999] bg-linear-to-r from-[#f5f5f5] to-[#cfcfcf]">
            <ThumbLines />
          </span>
        }
      />
    </div>
  </aside>
);

const components = ['JKL2(1)', 'JKL1(2)', 'JKL3(1)', 'JKL4(2)', 'JL1(1)'];

const ComponentPanel = () => (
  <>
    <PanelTitle title="构件列表" />
    <div className="flex h-7 shrink-0 items-center gap-2 bg-[#f5f5f5] pl-[5px]">
      <button type="button" className="flex items-center gap-[3px]"><Icon name="newcomp" />新建<Caret className="ml-px" /></button>
      <button type="button" aria-label="删除"><Icon name="del" className="size-[13px]" /></button>
      <button type="button" aria-label="复制"><Icon name="pages" /></button>
    </div>
    <div className="flex h-6 shrink-0 items-center bg-[#f0f0f0]">
      <input
        aria-label="搜索构件"
        placeholder="搜索构件..."
        className="h-6 w-[138px] border border-[#c0ccd8] bg-white pl-[3px] outline-none placeholder:text-[#808080]"
      />
      <button type="button" aria-label="搜索" className="ml-1.5"><Icon name="search" /></button>
    </div>
    <div className="mt-0.5 h-72 shrink-0 border border-[#8a8f96] bg-white pt-px pl-[9px] font-[Noto_Sans_CJK_SC,sans-serif]">
      <div className="flex h-4 items-center">
        <Expander open />
        <span className="w-[5px] border-b border-dotted border-[#888]" />
        <Icon name="beam" />
        <span className="ml-1">基础梁</span>
      </div>
      <ul>
        {components.map((c, i) => (
          <li key={c} className="flex h-4 items-center pl-[22px]">
            <Branch last={i === 4} className="w-[10px]" />
            <span className={clsx('flex h-4 items-center gap-[7px] pr-1 pl-[3px]', i === 4 && 'bg-[#316ac5]')}>
              <svg viewBox="0 0 12 12" className="size-3">{ICONS.gear}</svg>
              <Sim>{c}</Sim>
            </span>
          </li>
        ))}
      </ul>
    </div>
  </>
);

const DrawingPanel = () => (
  <>
    <div className="mt-[5px]"><PanelTitle title="图纸管理" /></div>
    <div className="mt-0.5 flex h-[19px] shrink-0 items-end font-[Noto_Sans_CJK_SC,sans-serif] whitespace-nowrap">
      <button type="button" className="h-[19px] w-[88px] border border-b-0 border-[#8a8f96] bg-white">图纸文件列表</button>
      <button type="button" className="h-[17px] w-[44px] overflow-hidden border-t border-[#8a8f96] bg-[#ebebeb] pl-1 text-left">图纸楼层</button>
      <button type="button" aria-label="上一个" className="flex h-4 w-4 items-center justify-center border border-[#aaa] bg-[#f4f4f4]">
        <svg viewBox="0 0 4 6" className="h-1.5 w-1"><path d="M4 0v6L0 3z" fill="#2d5aa0" /></svg>
      </button>
      <button type="button" aria-label="下一个" className="flex h-4 w-4 items-center justify-center border border-[#aaa] bg-[#f4f4f4]">
        <svg viewBox="0 0 4 6" className="h-1.5 w-1"><path d="M0 0v6l4-3z" fill="#2d7ad0" /></svg>
      </button>
    </div>
    <div className="flex h-[143px] w-[162px] shrink-0 flex-col border border-[#8a8f96] bg-white py-1 pr-0.5 pl-1">
      <div className="flex h-[25px] shrink-0 justify-between whitespace-nowrap border-b border-[#aaa] pb-px">
        <span className="flex">
          <button type="button" className="w-[58px] border border-[#aaa] bg-[#f4f4f4]">添加图纸</button>
          <button type="button" aria-label="更多添加方式" className="flex w-3 items-center justify-center border border-l-0 border-[#aaa] bg-[#f4f4f4]"><Caret /></button>
          <button type="button" className="w-[58px] border border-[#aaa] bg-[#f4f4f4]">整理图纸</button>
        </span>
        <span className="flex w-[13px] items-center justify-center border-l border-[#aaa] bg-[#f4f4f4]"><More /></span>
      </div>
      <div className="mt-0.5 flex min-h-0 flex-1 flex-col border border-[#999] bg-white font-[Noto_Sans_CJK_SC,sans-serif]">
        <table className="w-full table-fixed border-collapse whitespace-nowrap">
          <thead>
            <tr className="h-[26px]">
              <th className="w-[21px] border border-t-0 border-l-0 border-[#c0c0c0] bg-[#f5f5f5]" aria-label="序号" />
              <th className="border-b border-[#c0c0c0] bg-linear-to-b from-[#fad9a0] to-[#f2c15f] pl-5 font-normal text-[#5c0050]">图纸名称</th>
            </tr>
          </thead>
          <tbody>
            <tr className="h-5">
              <td className="border-r border-[#c0c0c0] bg-[#ffd58a] text-center text-[#5c0050]"><Sim>1</Sim></td>
              <td className="border-2 border-[#808080] bg-[#008020]">
                <span className="flex items-center gap-1">
                  <span className="flex size-3 shrink-0 items-center justify-center border border-[#888] bg-white"><span className="h-px w-2 bg-black" /></span>
                  <Sim>结构图_t8_t3(1)(1)</Sim>
                </span>
              </td>
            </tr>
            <tr className="h-[19px]">
              <td className="border-r border-b border-[#c0c0c0] bg-[#f5f5f5] text-center"><Sim>2</Sim></td>
              <td className="border-b border-[#c0c0c0] bg-[#ffff00]">
                <span className="flex items-start">
                  <span className="ml-2 h-2 w-[17px] border-b border-l border-[#bbb]" />
                  <span className="ml-1"><Sim>1.CADI</Sim></span>
                </span>
              </td>
            </tr>
          </tbody>
        </table>
        <div className="mt-auto flex h-4 items-center bg-[#f1f1f1] pl-1.5" aria-hidden="true">
          <svg viewBox="0 0 4 6" className="h-1.5 w-1"><path d="M4 0v6L0 3z" fill="#333" /></svg>
          <span className="ml-2.5 h-[14px] w-[15px] rounded-xs border border-[#999] bg-linear-to-b from-[#f5f5f5] to-[#d8d8d8]" />
          <svg viewBox="0 0 4 6" className="mr-1.5 ml-auto h-1.5 w-1"><path d="M0 0v6l4-3z" fill="#333" /></svg>
        </div>
      </div>
    </div>
    <div className="mt-[7px]"><PanelTitle title="CAD图层显示" /></div>
    <ul className="mt-0.5 min-h-0 flex-1 border border-b-0 border-[#8a8f96] bg-white pt-px pl-2.5 font-[Noto_Sans_CJK_SC,sans-serif]">
      {['已提取的CAD图层', 'CAD原始图层'].map((l, i) => (
        <li key={l} className="flex h-3.5 items-center">
          <Expander />
          <span className="mr-0.5 ml-1 w-1 border-b border-dotted border-[#888]" />
          <label className="flex items-center gap-[3px]">
            <input
              type="checkbox"
              defaultChecked={i === 0}
              className="h-[11px] w-[13px] appearance-none border border-[#888] bg-[#e4e4e4] bg-clip-content p-px checked:bg-[#1d87b8]"
            />
            <Sim>{l}</Sim>
          </label>
        </li>
      ))}
    </ul>
  </>
);

const DrawTools = () => (
  <div className="flex shrink-0 flex-col gap-px bg-[#f0f0f0]">
    <Bar className="mr-[45px] h-[27px]">
      <Grip />
      <Tool icon="erase" label="删除" />
      <Sep />
      <Tool icon="copy" label="复制" />
      <Tool icon="mirror" label="镜像" />
      <Sep />
      <Tool icon="move" label="移动" />
      <Tool icon="rotate" label="旋转" />
      <Sep />
      <Tool icon="extend" label="延伸" />
      <Tool icon="trim" label="修剪" />
      <Sep />
      <Tool icon="brk" label="打断" />
      <Tool icon="merge" label="合并" />
      <Tool icon="split" label="分割" disabled />
      <Sep />
      <Tool icon="align" label="对齐" caret tight />
      <Tool icon="offset" label="偏移" />
      <Tool icon="stretch" label="拉伸" />
      <Sep />
      <Tool icon="grip" label="设置夹点" disabled />
    </Bar>
    <div className="flex h-[27px]">
      <Bar className="w-[567px] shrink-0">
        <Grip />
        <div className="-ml-0.5 flex gap-0.5">
          <Combo name="楼层" value="基础层" className="w-[58px]" />
          <Combo name="构件大类" value="基础" className="w-[70px]" />
          <Combo name="构件类型" value="基础梁" className="w-[70px]" />
          <Combo name="构件名称" value="JL1(1)" className="w-[70px]" />
          <Combo name="分层" value="分层1" className="w-[70px]" />
        </div>
        <Sep />
        <div className="-ml-0.5 flex gap-[7px]">
          <Tool icon="prop" label="属性" active />
          <Tool icon="edit" label="编辑钢筋" active />
        </div>
        <More className="mr-[3px] ml-auto" />
      </Bar>
      <Bar className="flex-1">
        <Grip />
        <Tool icon="twopt" label="两点" />
        <Tool icon="parallel" label="平行" />
        <Tool icon="ptangle" label="点角" caret />
        <More className="mr-1 ml-auto" />
      </Bar>
    </div>
    <Bar className="h-7">
      <Grip />
      <Tool icon="cursor" label="选择" caret />
      <Sep />
      <Tool icon="line" label="直线" />
      <Tool icon="ptlen" label="点加长度" />
      <Tool icon="arc" label="三点画弧" caret />
      <Combo name="画法" value="" className="-ml-1 w-[54px]" />
      <Tool icon="rect" label="矩形" />
      <Sep />
      <Tool icon="smart" label="智能布置" caret tight />
      <Sep />
      <Tool icon="segprop" label="修改梁段属性" />
      <Tool icon="insitu" label="原位标注" caret />
      <Tool icon="respan" label="重提梁跨" caret />
      <More className="ml-5" />
      <Grip />
    </Bar>
  </div>
);

const poly = [
  // back and left slabs
  ['#007400', '515,374 545,369 1040,300 1030,318 593,384 560,392'],
  ['#005a00', '560,388 1030,318 1030,327 593,394'],
  ['#007400', '515,374 560,366 745,516 712,524'],
  ['#004b00', '515,374 712,524 711,533 515,382'],
  // slab and beam on axis 3
  ['#004b00', '1030,318 1087,362 1078,364 1030,327'],
  ['#007400', '1030,318 1043,313 1104,358 1087,363'],
  ['#007400', '1107,376 1121,372 1173,411 1173,428 1162,421'],
  ['#004b00', '1103,380 1110,377 1173,425 1173,429 1162,428'],
  ['#246b24', '1045,302 1121,358 1103,362 1043,313'],
  ['#37a037', '1045,302 1054,300 1122,351 1121,358'],
  ['#246b24', '1121,361 1173,400 1173,412 1121,374'],
  ['#37a037', '1121,362 1130,359 1173,392 1173,400'],
  // cross beam on axis B
  ['#3db33d', '917,391 1122,361 1121,374 1107,377 1104,380 937,407'],
  ['#4be84b', '917,390 1121,357 1123,361 921,395'],
  // slab and beam on axis 2
  ['#004b00', '815,350 965,460 949,462 815,359'],
  ['#007400', '815,350 828,344 977,457 965,461'],
  ['#246b24', '829,334 977,448 975,459 828,345'],
  ['#37a037', '829,334 842,333 978,439 977,448'],
  // selected beam
  ['#005ab4', '575,364 757,338 815,330 815,343 757,351 574,379'],
  ['#0075ea', '577,359 757,332 815,324 815,330 757,338 575,364'],
  ['#005ab4', '845,324 1026,298 1026,310 845,337'],
  ['#0075ea', '845,319 1026,292 1026,298 845,324'],
  // front slab and beam
  ['#007400', '712,524 737,512 986,474 1173,446 1173,455'],
  ['#005a00', '712,524 750,518 1173,454 1173,462 750,526 711,533'],
  ['#3db33d', '738,498 987,462 987,474 737,512'],
  ['#4be84b', '739,493 977,457 987,462 738,498'],
  ['#3db33d', '1010,457 1173,433 1173,446 1007,472'],
  ['#4be84b', '1011,452 1173,428 1173,433 1010,457'],
  // columns
  ['#4d0099', '544,343 559,353 553,388 540,379'],
  ['#5900b3', '559,353 577,351 573,379 553,388'],
  ['#7300e6', '544,343 565,340 577,351 559,354'],
  ['#4d0099', '814,303 830,313 823,347 812,340'],
  ['#5900b3', '830,313 847,310 845,337 837,332 829,334 828,346 822,347'],
  ['#7300e6', '814,303 836,300 847,310 830,313'],
  ['#4d0099', '1024,272 1040,280 1034,315 1022,308'],
  ['#5900b3', '1040,280 1057,278 1054,300 1045,302 1043,314 1033,315'],
  ['#7300e6', '1024,272 1045,267 1057,278 1040,281'],
  ['#4d0099', '908,369 912,372 910,394 904,391'],
  ['#5900b3', '912,372 919,370 916,393 910,394'],
  ['#7300e6', '908,369 913,367 919,370 912,372'],
  ['#5900b3', '1123,336 1135,338 1132,360 1121,359'],
  ['#7300e6', '1123,336 1133,334 1135,338 1126,340'],
  ['#4d0099', '979,431 992,440 987,461 976,457'],
  ['#5900b3', '992,440 1012,436 1007,472 986,475'],
  ['#7300e6', '979,431 999,427 1012,436 992,440'],
  ['#4d0099', '709,471 722,480 717,516 704,506'],
  ['#5900b3', '722,480 741,477 737,512 717,516'],
  ['#7300e6', '709,471 731,468 741,477 722,480'],
  // left beam
  ['#339933', '554,376 707,491 705,506 554,388'],
  ['#4be84b', '554,376 567,374 707,483 707,491'],
];

const bubbles = [
  [414, 290, '1'], [694, 247, '2'], [914, 214, '3'], [350, 415, 'C'], [523, 552, 'A'],
  [1120, 577, '2'], [818, 602, '1'], [1160, 292, 'C'], [1161, 373, 'B'],
];

const dims = [
  [680, 286, '12500'], [613, 332, '7000'], [863, 294, '5500'],
  [866, 528, '7000'], [1010, 541, '12500'], [1116, 490, '5500'],
];

const vdims = [[533, 486, '7000'], [593, 476, '7000'], [1169, 349, '3500']];

const ticks = [
  [464, 328], [500, 357], [781, 315], [1000, 281], [963, 252], [754, 552], [793, 582], [1033, 510],
];

const Viewport = () => (
  <svg viewBox="337 167 836 448" preserveAspectRatio="xMidYMid slice" className="min-h-0 w-full flex-1 bg-black">
    <g fill="none" stroke="#008000">
      <path d="M425 299L520 374M727 532L828 610M705 256L798 328M1005 488L1110 569M925 222L1018 294M362 413L522 389M1065 306L1172 290M536 551L700 526" />
      <path d="M464 328L963 252M500 357L544 351M577 346L1000 281M420 404L595 542M480 396L655 532M754 552L1173 489M793 582L1173 524M1100 302L1173 357M1086 299L1173 345" />
      <path d="M405 402l26 5M465 393l26 5M582 539l28 6M642 530l28 6M1090 302l22 2M1145 290l28 4" />
      {ticks.map(([x, y]) => (
        <path key={x} d={`M${x - 4} ${y + 6}l7-12M${x - 7} ${y - 2}l13 4`} />
      ))}
      <circle cx="1160" cy="455" r="13" />
    </g>
    {poly.map(([fill, points], i) => (
      <polygon key={i} fill={fill} points={points} />
    ))}
    {bubbles.map(([x, y]) => (
      <circle key={`${x}-${y}`} cx={x} cy={y} r="13" fill="none" stroke="#008000" />
    ))}
    <g fill="#e8e8e8" className="font-[Noto_Sans,sans-serif] text-lg">
      {bubbles.map(([x, y, t]) => (
        <text key={`${x}-${y}`} x={x + 1} y={y + 6} textAnchor="middle">{t}</text>
      ))}
      {dims.map(([x, y, t]) => (
        <text key={`${x}-${y}`} x={x} y={y}>{t}</text>
      ))}
      {vdims.map(([x, y, t]) => (
        <text key={`${x}-${y}`} transform={`translate(${x} ${y}) rotate(-90)`}>{t}</text>
      ))}
    </g>
    <path
      d="M565 340L757 311L1026 270M570 344L757 316L818 306M842 302L1028 274M559 354L709 470M566 352L717 469M834 312L985 428M842 311L993 427M1050 279L1173 374M1057 278L1173 367M913 367L1130 335M920 370L1133 338M737 473L990 435M741 477L989 440M1006 433L1173 407M1012 436L1173 412"
      fill="none"
      stroke="#00ffff"
    />
    <path d="M937 407L1103 382" stroke="#f00000" />
    <g fill="none" stroke="#b4b4b4" strokeOpacity=".7">
      <circle cx="755" cy="391" r="199" />
      <circle cx="755" cy="192" r="12.500" />
      <circle cx="755" cy="590" r="12.500" />
      <circle cx="556" cy="391" r="12.500" />
      <circle cx="954" cy="391" r="12.500" />
    </g>
    <g fill="none" strokeWidth="4">
      <path d="M392 565L372 549" stroke="#00ff00" />
      <path d="M392 565L424 561" stroke="#ff0000" />
      <path d="M392 565L397 530" stroke="#0080ff" />
    </g>
    <path d="M365 544l10 1-5 6z" fill="#00ff00" />
    <path d="M423 556l10 3-9 5z" fill="#ff0000" />
    <path d="M398 520l3 14-9-1z" fill="#0080ff" />
    <path d="M377 542l4 5 4-5M381 547v4" fill="none" stroke="#00c000" />
    <path d="M414 549l9 8M423 549l-9 8" stroke="#e00000" />
    <path d="M387 517h9l-9 8h9" fill="none" stroke="#0080ff" />
    <path d="M777 346L776 364L780 363L806 411L786 360L791 358z" fill="#ff3b3b" />
  </svg>
);

const NumberBox = ({ label }) => (
  <label className="flex shrink-0 items-center gap-[3px] text-[13px] text-[#808080]">
    {label}
    <span className="flex h-[23px] w-[57px] items-center border border-[#7a7a7a] bg-[#f0f0f0] pr-1">
      <input defaultValue="0" className="w-full min-w-0 pr-2 text-right outline-none" />
      <svg viewBox="0 0 6 16" className="h-4 w-1.5 shrink-0">
        <path d="M0 4l3-3 3 3zM0 12l3 3 3-3z" fill="#555" />
      </svg>
    </span>
    mm
  </label>
);

const SnapTools = () => (
  <div className="flex h-[29px] shrink-0 items-center gap-px bg-[#f0f0f0] pt-px">
    <Bar className="h-[27px] w-[210px] shrink-0">
      <Grip />
      <Tool icon="ortho" label="正交" />
      <div className="flex gap-[7px]">
        <Tool icon="snap" label="对象捕捉" active />
        <Tool icon="dynin" label="动态输入" active />
      </div>
    </Bar>
    <Bar className="h-[27px] w-[263px] shrink-0">
      <Grip />
      <Tool icon="cross" label="交点" />
      <Tool icon="perp" label="垂点" active />
      <Tool icon="mid" label="中点" active />
      <Tool icon="vertex" label="顶点" />
      <Tool icon="coord" label="坐标" />
    </Bar>
    <Bar className="h-[27px] flex-1">
      <Grip />
      <Combo name="偏移方式" value="不偏移" className="-ml-0.5 w-[57px]" />
      <Sep />
      <div className="-ml-1 flex gap-1">
        <NumberBox label="X=" />
        <NumberBox label="Y=" />
      </div>
      <Sep />
      <label className="-ml-1 flex shrink-0 items-center gap-2 whitespace-nowrap">
        <input type="checkbox" className="size-3 appearance-none border border-[#999] bg-[#f4f4f4]" />
        旋转
      </label>
      <More className="mr-1 ml-auto" />
    </Bar>
  </div>
);

const rebarRows = [
  { no: '11', name: '1跨.拉筋1', fig: '485', formula: '(250-2*45)+2*(11.9*d)', len: '350', shape: 'tie', h: 'h-[29px]' },
  { no: '12', name: '2跨.箍筋1', fig: '195', formula: '2*((250-2*45)+(500-2*45))+\n2*(11.9*d)', len: '1330', shape: 'hoop', h: 'h-[34px]' },
  { no: '13', name: '2跨.箍筋1', fig: '195', formula: '2*((250-2*45)+(500-2*45))+\n2*(11.9*d)', len: '1330', shape: 'hoop', h: 'h-[34px]' },
];

const RebarShape = ({ type }) =>
  type === 'tie' ? (
    <svg viewBox="0 0 200 28" className="mx-auto h-7 w-[200px] font-[DejaVu_Sans_Mono,monospace] text-[10px]">
      <path d="M49 24L37 12V6h130v7l-13 11" fill="none" stroke="#000" strokeWidth="2" />
      <text x="90" y="19">160</text>
    </svg>
  ) : (
    <svg viewBox="0 0 200 32" className="mx-auto h-8 w-[200px] font-[DejaVu_Sans_Mono,monospace] text-[10px]">
      <rect x="82" y="6" width="33" height="21" rx="1" fill="none" stroke="#000" strokeWidth="2" />
      <path d="M102 14l8-7M107 17l8-7" stroke="#000" strokeWidth="2" />
      <text x="55" y="22">410</text>
      <text x="83" y="25" fill="#f00">160</text>
    </svg>
  );

const rebarCols = [
  ['', 'w-[34px]'], ['筋号', 'w-[73px]'], ['直径(mm)', 'w-[56px]'], ['级别', 'w-[36px]'], ['图号', 'w-[33px]'],
  ['图形', 'w-[201px]'], ['计算公式', 'w-[166px]'], ['公式描述', ''], ['长度(mm', 'w-[50px]'],
];

const RebarPanel = () => (
  <div className="flex h-[126px] shrink-0 overflow-hidden bg-[#f0f0f0]">
    <div className="flex w-3 shrink-0 flex-col items-center pt-[5px]">
      <svg viewBox="0 0 10 9" className="h-[9px] w-2.5 shrink-0">
        <path d="M.5.5h9v8h-9zM2 2l6 5M8 2L2 7" fill="#fff" stroke="#333" />
        <path d="M0 1h10" stroke="#a03030" />
      </svg>
      <span className="mt-1 w-[7px] flex-1 border-x-2 border-dotted border-[#c4c4c4]" />
    </div>
    <div className="flex min-w-0 flex-1 flex-col">
      <div className="flex h-[30px] shrink-0 items-center gap-[7px] pl-0.5">
        <div className="flex gap-2.5">
          <button type="button" aria-label="首行"><Icon name="first" className="size-3.5" /></button>
          <button type="button" aria-label="上一行"><Icon name="prev" className="size-3.5" /></button>
          <button type="button" aria-label="下一行"><Icon name="next" className="size-3.5" /></button>
          <button type="button" aria-label="末行"><Icon name="last" className="size-3.5" /></button>
        </div>
        <Sep />
        <button type="button" aria-label="上移"><Icon name="up" /></button>
        <button type="button" aria-label="下移"><Icon name="down" /></button>
        <Sep />
        <Tool icon="insert" label="插入" disabled />
        <div className="w-[38px] overflow-hidden"><Tool icon="remove" label="删除" disabled /></div>
      </div>
      <div className="flex min-h-0 flex-1 overflow-hidden border border-b-0 border-[#a0a0a0] bg-[#f0f0f0] font-[Noto_Sans_CJK_SC,sans-serif]">
        <table className="h-min w-full table-fixed border-collapse whitespace-nowrap">
          <thead>
            <tr className="h-5 bg-linear-to-b from-white to-[#ededed]">
              {rebarCols.map(([label, w]) => (
                <th
                  key={label || 'no'}
                  className={clsx(
                    'border-r border-b border-[#b8b8b8] font-normal',
                    w,
                    label === '图形' && 'bg-linear-to-b from-[#fad9a0] to-[#f2c15f] text-[#5c0050]'
                  )}
                >
                  <Sim>{label}</Sim>
                </th>
              ))}
            </tr>
          </thead>
          <tbody>
            {rebarRows.map((r) => (
              <tr key={r.no} className={clsx('bg-[#ccffdb] *:border-r *:border-b *:border-[#b8b8b8]', r.h)}>
                <td className="bg-[#f5f5f5] pr-2 text-center"><Sim>{r.no}</Sim></td>
                <td className="border-r-black! pl-0.5"><Sim>{r.name}</Sim></td>
                <td className="pl-0.5"><Sim>8</Sim></td>
                <td className="text-center">Φ</td>
                <td className="pl-0.5"><Sim>{r.fig}</Sim></td>
                <td><RebarShape type={r.shape} /></td>
                <td className="pl-0.5 font-[DejaVu_Sans_Mono,monospace] text-[10px] leading-3 whitespace-pre">{r.formula}</td>
                <td />
                <td className="pl-0.5"><Sim>{r.len}</Sim></td>
              </tr>
            ))}
          </tbody>
        </table>
        <VScroll className="w-[17px]" />
      </div>
    </div>
  </div>
);

// [name, value, kind, nested]
const properties = [
  ['名称', 'JKL4(2)', 'selected'],
  ['类别', '基础主梁', 'blue'],
  ['截面宽度(mm)', '250'],
  ['截面高度(mm)', '500'],
  ['轴线距梁左边线距', '0'],
  ['跨数量', '2'],
  ['箍筋', 'Φ8@100/200(2)', 'blue'],
  ['肢数', '2', 'blue'],
  ['下部通长筋', '', 'blue'],
  ['上部通长筋', '2Ψ20', 'blue'],
  ['侧面构造或受扭筋', 'G2Ψ12', 'blue'],
  ['拉筋', '(Φ8)', 'blue'],
  ['其它箍筋', '', 'blue'],
  ['备注', ''],
  ['其它属性', '', 'group'],
  ['汇总信息', '基础梁', '', true],
  ['保护层厚度(mm)', '(45)', '', true],
  ['箍筋贯通布置', '是', '', true],
  ['计算设置', '按默认计算设置', '', true],
  ['节点设置', '按默认节点设置', '', true],
  ['搭接设置', '按默认搭接设置', '', true],
  ['起点顶标高(m)', '层顶标高-0.5(-0', '', true],
  ['终点顶标高(m)', '层顶标高-0.5(-0', 'end', true],
  ['锚固搭接', '', 'group'],
  ['抗震等级', '(三级抗震)', '', true],
  ['混凝土强度等级', 'C25', 'blue', true],
  ['HPB235(A),HPB3', '(36)', '', true],
  ['HRB335(B),HRB3', '(35/38)', '', true],
  ['HRB400(C),HRB4', '(42/46)', '', true],
  ['HRB500(E),HRB5', '(50/56)', '', true],
  ['冷轧带肋钢筋锚', '(42)', '', true],
  ['冷轧扭钢筋锚固', '(40)', '', true],
  ['HPB235(A),HPB3', '(50)', '', true],
  ['HRB335(B),HRB3', '(49/53)', '', true],
];

const RebarText = ({ text }) =>
  text.split(/([ΦΨ])/).map((t, i) =>
    t === 'Φ' || t === 'Ψ' ? (
      <span key={i} className={clsx('inline-block w-3 text-center', t === 'Ψ' && 'underline')}>Φ</span>
    ) : (
      <Sim key={i}>{t}</Sim>
    )
  );

const PropertyPanel = () => (
  <aside className="flex w-[257px] shrink-0 flex-col">
    <PanelTitle title="属性编辑器" />
    <div className="mt-0.5 flex min-h-0 flex-1 overflow-hidden border-t border-l border-[#999] bg-[#f0f0f0] font-[Noto_Sans_CJK_SC,sans-serif]">
      <table className="h-min w-[242px] table-fixed border-collapse whitespace-nowrap bg-white">
        <thead>
          <tr className="h-[22px] *:border-r *:border-b *:border-[#b8b8b8] *:font-normal">
            <th className="w-[22px] bg-[#f5f5f5]" aria-label="序号" />
            <th className="w-[121px] bg-linear-to-b from-white to-[#ededed]">属性名称</th>
            <th className="bg-linear-to-b from-[#fad9a0] to-[#f2c15f] text-[#5c0050]">属性值</th>
          </tr>
        </thead>
        <tbody>
          {properties.map(([name, value, kind, nested], i) => (
            <tr key={i} className="h-[19px] *:border-r *:border-b *:border-[#b8b8b8]">
              <td className={clsx('text-center', kind === 'selected' ? 'bg-[#ffd58a] text-[#5c0050]' : 'bg-[#f5f5f5]')}><Sim>{i + 1}</Sim></td>
              <td className={clsx('overflow-hidden', kind === 'selected' && 'bg-[#3399ff] text-white', kind === 'blue' && 'text-[#0000e6]', kind === 'group' && 'text-[#808080]')}>
                <span className="flex h-[18px] items-center">
                  {nested && (
                    <span className="ml-2 w-[17px] shrink-0">
                      <span className="block h-[9px] border-b border-l border-[#b8b8b8]" />
                      <span className={clsx('block h-[9px]', kind !== 'end' && 'border-l border-[#b8b8b8]')} />
                    </span>
                  )}
                  {kind === 'group' && (
                    <span className="ml-0.5 flex size-3 shrink-0 items-center justify-center border border-[#999] bg-[#f0f0f0]">
                      <span className="h-px w-2 bg-black" />
                    </span>
                  )}
                  <span className={nested || kind === 'group' ? 'ml-[5px]' : 'ml-5'}><Sim>{name}</Sim></span>
                </span>
              </td>
              <td className={clsx('overflow-hidden pl-0.5', kind === 'selected' && 'bg-[#e0efff]')}>
                <RebarText text={value} />
              </td>
            </tr>
          ))}
        </tbody>
      </table>
      <VScroll
        className="ml-0.5 flex-1"
        thumb={
          <span className="flex h-[602px] w-full shrink-0 items-center justify-center border border-[#999] bg-linear-to-r from-[#f5f5f5] to-[#cfcfcf]">
            <ThumbLines />
          </span>
        }
      />
    </div>
  </aside>
);

const App = () => {
  return (
    <div className="relative flex h-screen flex-col overflow-hidden bg-[#f0f0f0] font-[Noto_Sans,Noto_Sans_CJK_SC,sans-serif] text-xs leading-4 text-black">
      <TitleBar />
      <MenuBar />
      <MainTools />
      <main className="flex min-h-0 flex-1">
        <NavPanel />
        <section className="mx-1 mr-[3px] flex w-[164px] shrink-0 flex-col">
          <ComponentPanel />
          <DrawingPanel />
        </section>
        <section className="mr-[3px] flex min-w-0 flex-1 flex-col">
          <DrawTools />
          <Viewport />
          <SnapTools />
          <RebarPanel />
        </section>
        <PropertyPanel />
      </main>
      <svg viewBox="0 0 24 76" className="pointer-events-none absolute top-[74px] left-[694px] h-[76px] w-6">
        <path d="M9 1L2 21L6 20L18 75L15 19L17 20z" fill="#ff3b3b" />
      </svg>
      <button type="button" className="absolute top-[471px] right-0 flex h-[25px] w-[82px] items-center overflow-hidden border-y border-l border-[#2b7ab8] bg-[#cbe8fb] whitespace-nowrap text-[#4a7ba8]">
        <span className="flex h-full w-[29px] shrink-0 items-center justify-center bg-[#2b9be6]">
          <svg viewBox="0 0 20 16" className="h-4 w-5">
            <g fill="none" stroke="#fff" strokeWidth="2.500">
              <circle cx="10" cy="4.800" r="3.500" />
              <circle cx="5" cy="11" r="3.500" />
              <circle cx="15" cy="11" r="3.500" />
            </g>
          </svg>
        </span>
        <span className="ml-3">拖拽上传</span>
      </button>
    </div>
  );
};

export default App;
